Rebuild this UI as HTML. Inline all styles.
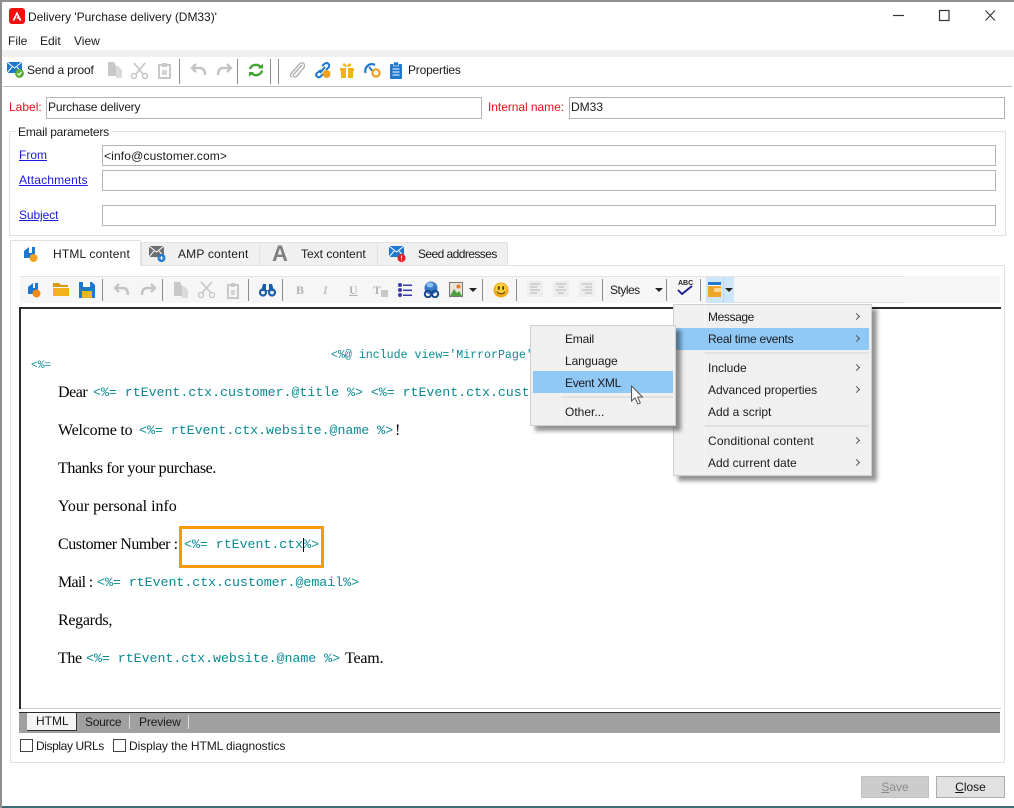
<!DOCTYPE html>
<html><head><meta charset="utf-8">
<style>
html,body{margin:0;padding:0;background:#fff}
#w{position:relative;width:1014px;height:808px;overflow:hidden;background:#fff;font-family:"Liberation Sans",sans-serif;font-size:12px;color:#1a1a1a}
#w div,#w svg,#w span.a{position:absolute}
.t{position:absolute;white-space:nowrap;line-height:16px;height:16px}
.r{color:#e8101c}
.l{color:#1a1ae0;text-decoration:underline}
.i{border:1px solid #b4b4b4;background:#fff;box-sizing:border-box;height:21px}
.m{position:absolute;white-space:nowrap;font-family:"Liberation Mono",monospace;font-size:13.33px;letter-spacing:-.06px;color:#0a8a94;line-height:16px;height:16px}
.s{position:absolute;white-space:nowrap;font-family:"Liberation Serif",serif;font-size:16px;color:#000;line-height:18px;height:18px}
.sep{width:1px;height:25px;background:#8c8c8c}
.sep2{width:1px;height:22px;background:#8c8c8c}
.tab{background:#f0f0f0;border:1px solid #e2e2e2;border-bottom:1px solid #e2e2e2;box-sizing:border-box}
.ar{width:5px;height:5px;border-top:1.3px solid #555;border-right:1.3px solid #555;transform:rotate(45deg);box-sizing:border-box}
.dn{width:0;height:0;border-left:4px solid transparent;border-right:4px solid transparent;border-top:4px solid #222}
</style></head><body>
<div id="w">
<!-- window edges -->
<div style="left:0;top:0;width:1014px;height:2px;background:#8f8f8f"></div>
<div style="left:0;top:0;width:2px;height:808px;background:#8f8f8f"></div>
<div style="left:2px;top:806px;width:1012px;height:2px;background:#3f6a78"></div>

<!-- title -->
<svg style="left:9px;top:8px" width="16" height="16" viewBox="0 0 16 16"><rect width="16" height="16" rx="3" fill="#f01010"/><path d="M8 3.5L12.5 12.5H10.3L9.5 10.5H7.3L8.6 8.3L8 6.8L5.6 12.5H3.5Z" fill="#fff"/></svg>
<span class="t" style="left:28px;top:9px;letter-spacing:-.03px">Delivery 'Purchase delivery (DM33)'</span>
<svg style="left:880px;top:8px" width="120" height="16" viewBox="0 0 120 16" fill="none" stroke="#333"><path d="M13 7.5H24" stroke-width="1.2"/><rect x="59.5" y="2.5" width="9.5" height="10" stroke-width="1.2"/><path d="M105.5 2.5L115 12.5M115 2.5L105.5 12.5" stroke-width="1.1"/></svg>

<!-- menu -->
<span class="t" style="left:8px;top:33px">File</span>
<span class="t" style="left:40px;top:33px">Edit</span>
<span class="t" style="left:74px;top:33px">View</span>
<div style="left:2px;top:50px;width:1012px;height:7px;background:#f0f0f0"></div>

<!-- main toolbar -->
<svg style="left:7px;top:61px" width="20" height="18" viewBox="0 0 20 18"><rect x="0" y="1" width="15" height="11" fill="#1f78c8"/><path d="M0 1L7.500 7L15 1M0 12L5 6M15 12L10 6" stroke="#fff" fill="none"/><circle cx="12.500" cy="12.500" r="4.500" fill="#5fae3a"/><path d="M10.500 12.500L12 14L14.500 11" stroke="#fff" fill="none" stroke-width="1.200"/></svg>
<span class="t" style="left:27px;top:62px;letter-spacing:-.17px">Send a proof</span>
<svg style="left:106px;top:60px" width="66" height="20" viewBox="0 0 66 20" fill="#d0d0d0"><path d="M2 2H8L10 6V16H2Z" fill="#c8c8c8"/><path d="M10 6H12L16 10V18H10Z" fill="#dadada"/><path d="M28 3l9 11M39 3l-9 11" stroke="#c4c4c4" stroke-width="1.600" fill="none"/><circle cx="28" cy="16" r="2.500" fill="none" stroke="#c4c4c4" stroke-width="1.400"/><circle cx="39" cy="16" r="2.500" fill="none" stroke="#c4c4c4" stroke-width="1.400"/><rect x="53" y="5" width="11" height="13" fill="none" stroke="#c8c8c8" stroke-width="2"/><rect x="56" y="3" width="5" height="4" fill="#c8c8c8"/><rect x="56" y="10" width="5" height="5" fill="#d4d4d4"/></svg>
<div class="sep" style="left:179px;top:59px"></div>
<svg style="left:189px;top:62px" width="44" height="16" viewBox="0 0 44 16" fill="none" stroke="#c4c4c4" stroke-width="2.400"><path d="M3 6H11C15 6 16 9 16 13"/><path d="M7 2L3 6L7 10"/><path d="M42 6H34C30 6 29 9 29 13"/><path d="M38 2L42 6L38 10"/></svg>
<div class="sep" style="left:237px;top:59px"></div>
<svg style="left:248px;top:61px" width="16" height="18" viewBox="0 0 16 18" fill="none" stroke="#45a234" stroke-width="2.400"><path d="M2 8C3 4 9 2 12.500 6"/><path d="M14 9.500C13 14 7 16 3.500 12"/><path d="M15 2.500V7.500H10" fill="#45a234" stroke="none"/><path d="M1 16V11H6" fill="#45a234" stroke="none"/></svg>
<div class="sep" style="left:270px;top:59px"></div>
<div class="sep" style="left:278px;top:59px"></div>
<svg style="left:289px;top:61px" width="16" height="18" viewBox="0 0 16 18" fill="none" stroke="#b0b0b0" stroke-width="1.400"><path d="M13 4L5 13C3 15.500 6 17 8 15L15 6.500C17 3 13 0 10.500 3L3 11.500C0 15 2 16 3 16"/></svg>
<svg style="left:314px;top:61px" width="18" height="18" viewBox="0 0 18 18" fill="none" stroke="#1e78d0" stroke-width="2"><path d="M8 5L11 2.500C13 1 16 3 15 6L12 9"/><path d="M7 9L3 12C1 14 3 17 6 16L9 13"/><path d="M6 12L11 6"/><circle cx="12.500" cy="13" r="4" fill="#f0a020" stroke="none"/></svg>
<svg style="left:339px;top:61px" width="16" height="18" viewBox="0 0 16 18"><path d="M1 7H15V10H1ZM2 10H14V17H2Z" fill="#f2b31a"/><path d="M7 5H9V17H7Z" fill="#fff"/><path d="M4 3C5 1 7 3 8 6C9 3 11 1 12 3C13 5 9 6 8 6C7 6 3 5 4 3Z" fill="#f2b31a"/></svg>
<svg style="left:364px;top:61px" width="17" height="18" viewBox="0 0 17 18" fill="none"><path d="M1.500 12C0 6 6 1 11 4" stroke="#1e78d0" stroke-width="2.200"/><path d="M5 6L8.500 10" stroke="#1e78d0" stroke-width="1.800"/><circle cx="12" cy="12" r="3.600" stroke="#f0a020" stroke-width="2.200"/></svg>
<svg style="left:390px;top:61px" width="12" height="18" viewBox="0 0 12 18"><rect x="0" y="3" width="12" height="15" rx="1" fill="#1e78d0"/><rect x="3.500" y="1" width="5" height="4" fill="#1e78d0" stroke="#fff" stroke-width=".6"/><path d="M2.500 8H9.500M2.500 11H9.500M2.500 14H9.500" stroke="#fff"/></svg>
<span class="t" style="left:408px;top:62px;letter-spacing:-.2px">Properties</span>
<div style="left:3px;top:86px;width:1009px;height:1px;background:#bdbdbd"></div>

<!-- label -->
<span class="t r" style="left:9px;top:99px">Label:</span>
<div class="i" style="left:46px;top:97px;width:436px;height:22px"></div>
<span class="t" style="left:48px;top:99px;letter-spacing:-.18px">Purchase delivery</span>
<span class="t r" style="left:488px;top:99px;letter-spacing:-.05px">Internal name:</span>
<div class="i" style="left:569px;top:97px;width:436px;height:22px"></div>
<span class="t" style="left:571px;top:99px">DM33</span>

<!-- fieldset -->
<div style="left:9px;top:131px;width:997px;height:105px;border:1px solid #e0e0e0;box-sizing:border-box"></div>
<div style="left:16px;top:126px;width:95px;height:10px;background:#fff"></div>
<span class="t" style="left:18px;top:124px;letter-spacing:-.19px">Email parameters</span>
<span class="t l" style="left:19px;top:147px">From</span>
<div class="i" style="left:102px;top:145px;width:894px"></div>
<span class="t" style="left:104px;top:148px;letter-spacing:.15px">&lt;info@customer.com&gt;</span>
<span class="t l" style="left:19px;top:172px;letter-spacing:.18px">Attachments</span>
<div class="i" style="left:102px;top:170px;width:894px"></div>
<span class="t l" style="left:19px;top:207px;letter-spacing:-.1px">Subject</span>
<div class="i" style="left:102px;top:205px;width:894px"></div>

<!-- tab panel -->
<div style="left:10px;top:265px;width:995px;height:498px;border:1px solid #e0e0e0;box-sizing:border-box"></div>
<div class="tab" style="left:141px;top:242px;width:119px;height:24px"></div>
<div class="tab" style="left:259px;top:242px;width:119px;height:24px"></div>
<div class="tab" style="left:377px;top:242px;width:131px;height:24px"></div>
<div style="left:10px;top:240px;width:131px;height:26px;background:#fff;border:1px solid #e0e0e0;border-bottom:none;box-sizing:border-box"></div>
<svg style="left:23px;top:245px" width="16" height="18" viewBox="0 0 16 18"><path d="M1 6L6 2V8H9V2H12V13H1Z" fill="#1e78d0"/><circle cx="10.500" cy="13" r="4" fill="#f0a020"/></svg>
<span class="t" style="left:53px;top:246px;letter-spacing:.17px">HTML content</span>
<svg style="left:149px;top:245px" width="18" height="18" viewBox="0 0 18 18"><rect x="0" y="1" width="15" height="11" fill="#6e6e6e"/><path d="M0 1L7.500 7L15 1M0 12L5 6M15 12L10 6" stroke="#fff" fill="none"/><circle cx="12.500" cy="13" r="4" fill="#1e78d0"/><path d="M12.500 11V15M10.500 13H14.500" stroke="#fff"/></svg>
<span class="t" style="left:178px;top:246px;letter-spacing:.18px">AMP content</span>
<span class="t" style="left:272px;top:242px;font-size:22px;font-weight:bold;color:#808080;line-height:24px;height:24px">A</span>
<span class="t" style="left:301px;top:246px">Text content</span>
<svg style="left:389px;top:245px" width="18" height="18" viewBox="0 0 18 18"><rect x="0" y="1" width="15" height="11" fill="#1e78d0"/><path d="M0 1L7.500 7L15 1M0 12L5 6M15 12L10 6" stroke="#fff" fill="none"/><circle cx="12.500" cy="13" r="4" fill="#e02020"/><path d="M12.500 10.500V13.500M12.500 14.500V15.500" stroke="#fff"/></svg>
<span class="t" style="left:418px;top:246px;letter-spacing:-.57px">Seed addresses</span>

<!-- editor toolbar -->
<div style="left:20px;top:276px;width:980px;height:27px;background:#f6f6f6"></div>
<div style="left:20px;top:276px;width:885px;height:1px;background:#e4e4e4"></div>
<svg style="left:26px;top:281px" width="16" height="18" viewBox="0 0 16 18"><path d="M2 6L7 2V7H9V2H12V13H2Z" fill="#1e78d0"/><circle cx="10.500" cy="12.500" r="4" fill="#f08a10"/></svg>
<svg style="left:53px;top:282px" width="16" height="15" viewBox="0 0 16 15"><path d="M0 1H6L8 3H15V5H0Z" fill="#d89a10"/><path d="M0 6H16V14H0Z" fill="#f2b31a"/></svg>
<svg style="left:79px;top:281px" width="16" height="17" viewBox="0 0 16 17"><path d="M0 1H13L16 4V17H0Z" fill="#1e78d0"/><rect x="4" y="1" width="7" height="5" fill="#fff"/><rect x="3" y="10" width="10" height="7" fill="#f2b31a"/></svg>
<div class="sep2" style="left:102px;top:279px"></div>
<svg style="left:113px;top:282px" width="44" height="16" viewBox="0 0 44 16" fill="none" stroke="#c4c4c4" stroke-width="2.400"><path d="M2 6H10C14 6 15 9 15 13"/><path d="M6 2L2 6L6 10"/><path d="M42 6H34C30 6 29 9 29 13"/><path d="M38 2L42 6L38 10"/></svg>
<div class="sep2" style="left:162px;top:279px"></div>
<svg style="left:173px;top:281px" width="66" height="18" viewBox="0 0 66 18" fill="#d0d0d0"><path d="M1 1H7L9 5V15H1Z" fill="#c8c8c8"/><path d="M9 5H11L15 9V17H9Z" fill="#dadada"/><path d="M28 1L38 12M39 1L29 12" stroke="#c4c4c4" stroke-width="1.500" fill="none"/><circle cx="28" cy="14" r="2.500" fill="none" stroke="#c4c4c4" stroke-width="1.300"/><circle cx="39" cy="14" r="2.500" fill="none" stroke="#c4c4c4" stroke-width="1.300"/><rect x="55" y="4" width="10" height="13" fill="none" stroke="#c8c8c8" stroke-width="2"/><rect x="58" y="2" width="4" height="4" fill="#c8c8c8"/><rect x="58" y="9" width="4" height="5" fill="#d4d4d4"/></svg>
<div class="sep2" style="left:248px;top:279px"></div>
<svg style="left:259px;top:282px" width="17" height="15" viewBox="0 0 17 15" fill="#1a5ea8"><circle cx="4" cy="10.500" r="3" fill="none" stroke="#1a5ea8" stroke-width="2.200"/><circle cx="13" cy="10.500" r="3" fill="none" stroke="#1a5ea8" stroke-width="2.200"/><path d="M2 9L4 2H7V8H10V2H13L15 9Z"/></svg>
<div class="sep2" style="left:282px;top:279px"></div>
<span class="t" style="left:296px;top:282px;font-family:'Liberation Serif',serif;font-weight:bold;font-size:12px;color:#b4b4b4">B</span>
<span class="t" style="left:323px;top:282px;font-family:'Liberation Serif',serif;font-style:italic;font-weight:bold;font-size:12px;color:#c0c0c0">I</span>
<span class="t" style="left:349px;top:282px;font-family:'Liberation Serif',serif;font-weight:bold;font-size:12px;color:#b4b4b4;text-decoration:underline">U</span>
<span class="t" style="left:373px;top:282px;font-family:'Liberation Serif',serif;font-weight:bold;font-size:12px;color:#b4b4b4">T</span>
<div style="left:381px;top:290px;width:7px;height:7px;background:#c8c8c8"></div>
<svg style="left:398px;top:283px" width="14" height="14" viewBox="0 0 14 14" fill="#3a3ab0"><circle cx="2" cy="2" r="2"/><circle cx="2" cy="7" r="2"/><circle cx="2" cy="12" r="2"/><path d="M5 1.500H14V3H5ZM5 6.500H14V8H5ZM5 11.500H14V13H5Z"/></svg>
<svg style="left:423px;top:281px" width="17" height="17" viewBox="0 0 17 17"><circle cx="8" cy="7" r="6.500" fill="#3a78cc"/><ellipse cx="7" cy="4" rx="3.500" ry="2.500" fill="#8cc0f0"/><circle cx="5" cy="13" r="3.200" fill="none" stroke="#1a4a88" stroke-width="2"/><circle cx="12" cy="13" r="3.200" fill="none" stroke="#1a4a88" stroke-width="2"/></svg>
<svg style="left:449px;top:282px" width="14" height="15" viewBox="0 0 14 15"><rect x=".5" y=".5" width="13" height="14" fill="#e8e4d8" stroke="#777"/><path d="M1 14L5 7L8 11L10 9L13 14Z" fill="#4ea040"/><circle cx="9.500" cy="4.500" r="2" fill="#e87a30"/></svg>
<div class="dn" style="left:469px;top:288px"></div>
<div class="sep2" style="left:482px;top:279px"></div>
<svg style="left:493px;top:282px" width="16" height="16" viewBox="0 0 16 16"><circle cx="8" cy="8" r="7.500" fill="#f0a818"/><circle cx="8" cy="7" r="5.500" fill="#fad040"/><ellipse cx="5.800" cy="6" rx="1" ry="2" fill="#5a3a08"/><ellipse cx="10.200" cy="6" rx="1" ry="2" fill="#5a3a08"/><path d="M4 9.500C6 12.500 10 12.500 12 9.500" stroke="#5a3a08" fill="none"/></svg>
<div class="sep2" style="left:516px;top:279px"></div>
<svg style="left:527px;top:281px" width="68" height="16" viewBox="0 0 68 16" stroke="#c0c0c0" stroke-width="1.200"><rect x="0" y="0" width="16" height="16" fill="#eeeeee" stroke="none"/><rect x="26" y="0" width="16" height="16" fill="#eeeeee" stroke="none"/><rect x="52" y="0" width="16" height="16" fill="#eeeeee" stroke="none"/><path d="M3 3H13M3 6H10M3 9H13M3 12H10"/><path d="M29 3H39M31 6H37M29 9H39M31 12H37"/><path d="M55 3H65M58 6H65M55 9H65M58 12H65"/></svg>
<div class="sep2" style="left:602px;top:279px"></div>
<span class="t" style="left:610px;top:282px;letter-spacing:-.5px">Styles</span>
<div class="dn" style="left:655px;top:288px"></div>
<div class="sep2" style="left:666px;top:279px"></div>
<span class="t" style="left:678px;top:279px;font-size:7px;font-weight:bold;color:#222;line-height:9px;height:9px">ABC</span>
<svg style="left:677px;top:283px" width="16" height="13" viewBox="0 0 16 13" fill="none" stroke="#1a1a90" stroke-width="1.800"><path d="M1 7L5 11L15 3"/></svg>
<div class="sep2" style="left:700px;top:279px"></div>
<div style="left:706px;top:277px;width:28px;height:26px;background:#cfe5f8"></div>
<div style="left:723px;top:277px;width:1px;height:26px;background:#bcd8f0"></div>
<svg style="left:708px;top:282px" width="13" height="15" viewBox="0 0 13 15"><rect width="13" height="15" fill="#f2a428"/><rect width="13" height="3" fill="#1e78d0"/><rect x="0" y="3" width="13" height="1" fill="#fff"/><rect x="6" y="6" width="7" height="4" fill="#fbd890"/></svg>
<div class="dn" style="left:725px;top:288px"></div>
<div style="left:734px;top:302px;width:171px;height:1px;background:#dcdcdc"></div>

<!-- editor -->
<div style="left:19px;top:307px;width:982px;height:402px;background:#fff"></div>
<div style="left:19px;top:307px;width:982px;height:2px;background:#2c2c2c"></div>
<div style="left:19px;top:307px;width:2px;height:402px;background:#2c2c2c"></div>
<div style="left:21px;top:708px;width:980px;height:1px;background:#c8c8c8"></div>

<span class="m" style="left:331px;top:348px;font-size:11.6px;letter-spacing:0">&lt;%@ include view='MirrorPage'</span>
<span class="m" style="left:31px;top:358px;font-size:11.2px;letter-spacing:0">&lt;%=</span>

<span class="s" style="left:58px;top:384px;letter-spacing:-.45px">Dear</span>
<span class="m" style="left:93px;top:386px">&lt;%= rtEvent.ctx.customer.@title %&gt; &lt;%= rtEvent.ctx.customer.@lastName</span>
<span class="s" style="left:58px;top:422px;letter-spacing:-.2px">Welcome to</span>
<span class="m" style="left:139px;top:424px">&lt;%= rtEvent.ctx.website.@name %&gt;</span>
<span class="s" style="left:395px;top:422px">!</span>
<span class="s" style="left:58px;top:460px;letter-spacing:-.4px">Thanks for your purchase.</span>
<span class="s" style="left:58px;top:498px;letter-spacing:-.03px">Your personal info</span>
<span class="s" style="left:58px;top:536px;letter-spacing:-.44px">Customer Number :</span>
<span class="m" style="left:184px;top:538px">&lt;%= rtEvent.ctx%&gt;</span>
<div style="left:303px;top:538px;width:1px;height:14px;background:#000"></div>
<div style="left:179px;top:526px;width:145px;height:42px;border:3px solid #f99a00;box-sizing:border-box"></div>
<span class="s" style="left:58px;top:574px;letter-spacing:-.7px">Mail :</span>
<span class="m" style="left:97px;top:576px">&lt;%= rtEvent.ctx.customer.@email%&gt;</span>
<span class="s" style="left:58px;top:612px;letter-spacing:-.3px">Regards,</span>
<span class="s" style="left:58px;top:650px;letter-spacing:-.4px">The</span>
<span class="m" style="left:86px;top:652px">&lt;%= rtEvent.ctx.website.@name %&gt;</span>
<span class="s" style="left:345px;top:650px;letter-spacing:-.2px">Team.</span>

<!-- bottom tabs -->
<div style="left:19px;top:713px;width:981px;height:20px;background:#a0a0a0"></div>
<div style="left:19px;top:712px;width:981px;height:1px;background:#2c2c2c"></div>
<div style="left:27px;top:713px;width:50px;height:18px;background:#f4f4f4;border-right:1px solid #333;border-bottom:1px solid #333;box-sizing:border-box"></div>
<span class="t" style="left:36px;top:713px">HTML</span>
<span class="t" style="left:85px;top:714px;letter-spacing:-.3px">Source</span>
<div style="left:129px;top:715px;width:1px;height:14px;background:#ddd"></div>
<span class="t" style="left:139px;top:714px;letter-spacing:-.15px">Preview</span>
<div style="left:188px;top:715px;width:1px;height:14px;background:#ddd"></div>

<!-- checkboxes -->
<div style="left:20px;top:739px;width:13px;height:13px;border:1px solid #444;background:#fff;box-sizing:border-box"></div>
<span class="t" style="left:36px;top:738px;letter-spacing:-.4px">Display URLs</span>
<div style="left:113px;top:739px;width:13px;height:13px;border:1px solid #444;background:#fff;box-sizing:border-box"></div>
<span class="t" style="left:129px;top:738px;letter-spacing:-.07px">Display the HTML diagnostics</span>

<!-- buttons -->
<div style="left:861px;top:776px;width:68px;height:22px;background:#cccccc;border:1px solid #bfbfbf;box-sizing:border-box"></div>
<span class="t" style="left:861px;top:779px;width:68px;text-align:center;color:#8a8a8a"><u>S</u>ave</span>
<div style="left:936px;top:776px;width:69px;height:22px;background:#e1e1e1;border:1px solid #adadad;box-sizing:border-box"></div>
<span class="t" style="left:936px;top:779px;width:69px;text-align:center;color:#111"><u>C</u>lose</span>

<!-- main dropdown -->
<div style="left:673px;top:304px;width:199px;height:172px;background:#f0f0f0;border:1px solid #cfcfcf;box-sizing:border-box;box-shadow:5px 5px 4px rgba(0,0,0,.42)"></div>
<div style="left:704px;top:305px;width:1px;height:170px;background:#f5f5f5"></div>
<div style="left:676px;top:328px;width:193px;height:22px;background:#90c8f6"></div>
<div style="left:704px;top:352px;width:165px;height:2px;background:#e2e2e2"></div>
<div style="left:704px;top:425px;width:165px;height:2px;background:#e2e2e2"></div>
<span class="t" style="left:708px;top:309px;letter-spacing:-.4px">Message</span>
<span class="t" style="left:708px;top:331px;letter-spacing:-.25px">Real time events</span>
<span class="t" style="left:708px;top:360px">Include</span>
<span class="t" style="left:708px;top:382px;letter-spacing:-.05px">Advanced properties</span>
<span class="t" style="left:708px;top:404px">Add a script</span>
<span class="t" style="left:708px;top:433px;letter-spacing:.16px">Conditional content</span>
<span class="t" style="left:708px;top:455px">Add current date</span>
<div class="ar" style="left:854px;top:314px"></div>
<div class="ar" style="left:854px;top:336px"></div>
<div class="ar" style="left:854px;top:365px"></div>
<div class="ar" style="left:854px;top:387px"></div>
<div class="ar" style="left:854px;top:438px"></div>
<div class="ar" style="left:854px;top:460px"></div>

<!-- submenu -->
<div style="left:530px;top:325px;width:146px;height:101px;background:#f0f0f0;border:1px solid #cfcfcf;box-sizing:border-box;box-shadow:5px 5px 4px rgba(0,0,0,.42)"></div>
<div style="left:561px;top:326px;width:1px;height:99px;background:#f5f5f5"></div>
<div style="left:533px;top:371px;width:140px;height:22px;background:#90c8f6"></div>
<div style="left:561px;top:396px;width:112px;height:2px;background:#e2e2e2"></div>
<span class="t" style="left:565px;top:331px;letter-spacing:-.2px">Email</span>
<span class="t" style="left:565px;top:353px;letter-spacing:-.1px">Language</span>
<span class="t" style="left:565px;top:375px;letter-spacing:-.3px">Event XML</span>
<span class="t" style="left:565px;top:404px">Other...</span>

<!-- cursor -->
<svg style="left:630px;top:385px" width="16" height="21" viewBox="0 0 16 21"><path d="M1.500 1V16L5 12.800L7.800 19L10.300 17.900L7.600 12H12.500Z" fill="#fff" stroke="#555" stroke-width="1"/></svg>
</div>
</body></html>
